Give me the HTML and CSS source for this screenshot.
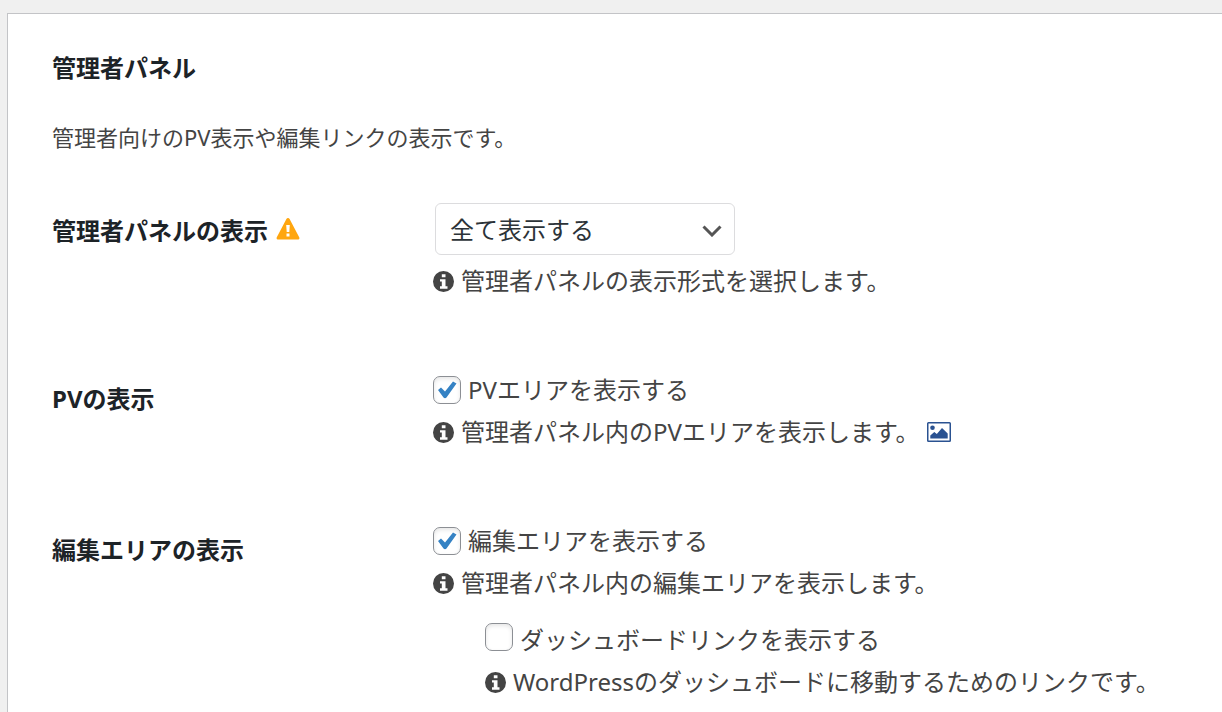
FILE: index.html
```html
<!DOCTYPE html>
<html lang="ja">
<head>
<meta charset="utf-8">
<meta name="viewport" content="width=device-width, initial-scale=1">
<title>管理者パネル</title>
<link rel="stylesheet" href="styles.css">
</head>
<body>
<svg class="defs" aria-hidden="true">
  <symbol id="icon-info" viewBox="0 0 21 21">
    <path fill="currentColor" fill-rule="evenodd" d="M10.500 0a10.500 10.500 0 1 1 0 21 10.500 10.500 0 0 1 0-21zM8.800 3.200v3h3.700v-3zM7 8.300v2.200h1.800v4.800H7v2.400h7.500v-2.400h-2V8.300z"/>
  </symbol>
</svg>
<main class="panel">
  <h2 class="title">管理者パネル</h2>
  <p class="lead">管理者向けのPV表示や編集リンクの表示です。</p>
  <div class="rows">
    <section class="row">
      <label class="name" for="panel-display">管理者パネルの表示
        <svg class="warn" viewBox="0 0 24 22" aria-hidden="true">
          <path fill="#ffa60f" fill-rule="evenodd" d="M10.400.9a1.900 1.900 0 0 1 3.200 0l9.600 18.400c.6 1.200-.1 2.200-1.500 2.200H2.300C.9 21.500.2 20.500.8 19.300zM10.200 7l.5 7h2.600l.5-7zM10.500 15.600v3h3v-3z"/>
        </svg>
      </label>
      <div class="field">
        <div class="select-wrap">
          <select class="select" id="panel-display"><option>全て表示する</option></select>
          <svg class="chevron" viewBox="0 0 20 12" aria-hidden="true"><path d="M1.500 1.500 10 10l8.500-8.500" fill="none" stroke="#555" stroke-width="3"/></svg>
        </div>
        <p class="tip"><svg class="info" aria-hidden="true"><use href="#icon-info"/></svg>管理者パネルの表示形式を選択します。</p>
      </div>
    </section>
    <section class="row">
      <h3 class="name name-check">PVの表示</h3>
      <div class="field">
        <label class="option"><input class="check" type="checkbox" checked>PVエリアを表示する</label>
        <p class="tip"><svg class="info" aria-hidden="true"><use href="#icon-info"/></svg>管理者パネル内のPVエリアを表示します。
          <a class="preview" href="#" aria-label="プレビュー画像"><svg class="picture" viewBox="0 0 24 20" aria-hidden="true">
            <path fill="#2a5291" fill-rule="evenodd" d="M1.500 0h21A1.500 1.500 0 0 1 24 1.500v17a1.500 1.500 0 0 1-1.500 1.500h-21A1.500 1.500 0 0 1 0 18.500v-17A1.500 1.500 0 0 1 1.500 0zM1.500 1.500v17h21v-17z"/>
            <circle cx="5.500" cy="5.800" r="2.300" fill="#2a5291"/>
            <path fill="#2a5291" d="M3.300 16.400v-3l4-3.300 2.500 1.800L15 6l5.700 5.500v4.900z"/>
          </svg></a>
        </p>
      </div>
    </section>
    <section class="row">
      <h3 class="name name-check">編集エリアの表示</h3>
      <div class="field">
        <label class="option"><input class="check" type="checkbox" checked>編集エリアを表示する</label>
        <p class="tip"><svg class="info" aria-hidden="true"><use href="#icon-info"/></svg>管理者パネル内の編集エリアを表示します。</p>
        <div class="nested">
          <label class="option"><input class="check" type="checkbox">ダッシュボードリンクを表示する</label>
          <p class="tip"><svg class="info" aria-hidden="true"><use href="#icon-info"/></svg>WordPressのダッシュボードに移動するためのリンクです。</p>
        </div>
      </div>
    </section>
  </div>
</main>
</body>
</html>
```
FILE: styles.css
```css
* { box-sizing: border-box; }

body {
  margin: 0;
  padding: 13px 0 0 7px;
  background: #f0f0f0;
  color: #444;
  font: 24px/42px "Noto Sans", "Noto Sans CJK JP", sans-serif;
  overflow-x: hidden;
}

.defs {
  position: absolute;
  width: 0;
  height: 0;
}

.panel {
  min-height: calc(100vh - 13px);
  padding: 33px 44px 8px;
  background: #fff;
  border: 1px solid #c3c4c7;
  border-right: 0;
  border-bottom: 0;
}

.title,
.name,
.lead,
.tip { margin: 0; }

.title,
.name {
  color: #1d2327;
  font-size: 24px;
  font-weight: 700;
}

.lead {
  margin-top: 27px;
  font-size: 22px;
}

.rows {
  display: grid;
  gap: 67px;
  margin-top: 45px;
}

.row {
  display: grid;
  grid-template-columns: 381px minmax(0, 1fr);
}

.name {
  display: flex;
  align-items: center;
  align-self: start;
  gap: 8px;
  padding-top: 7px;
}

.name-check { padding-top: 9px; }

.warn {
  width: 24px;
  height: 22px;
  margin-bottom: 4px;
}

.select-wrap {
  position: relative;
  width: 300px;
  margin: 0 0 5px 2px;
}

.select {
  display: block;
  width: 100%;
  height: 52px;
  padding: 1px 48px 0 14px;
  appearance: none;
  background: #fff;
  border: 1px solid #dcdcde;
  border-radius: 6px;
  color: #2c3338;
  font: inherit;
}

.chevron {
  position: absolute;
  top: 22px;
  right: 13px;
  width: 20px;
  height: 12px;
  pointer-events: none;
}

.tip,
.option {
  display: flex;
  align-items: center;
  gap: 7px;
}

.info {
  flex: none;
  width: 21px;
  height: 21px;
}

.check {
  flex: none;
  width: 28px;
  height: 28px;
  margin: 0;
  appearance: none;
  background: #fff;
  border: 1px solid #8c8f94;
  border-radius: 7px;
  box-shadow: inset 0 2px 4px rgba(0, 0, 0, 0.1);
}

.check:checked {
  background: #fff url("data:image/svg+xml,%3Csvg xmlns='http://www.w3.org/2000/svg' viewBox='0 0 26 26'%3E%3Cpath d='M4 13 7 10.500 11 14.500 19 4.500 22.500 6.500 12.500 20.500Q11 22 9.500 20.500z' fill='%233582c4'/%3E%3C/svg%3E") center / 26px 26px no-repeat;
}

.preview { display: flex; }

.picture {
  width: 24px;
  height: 20px;
}

.nested {
  padding: 15px 0 0 52px;
}

.nested .check { margin-bottom: 6px; }
```
